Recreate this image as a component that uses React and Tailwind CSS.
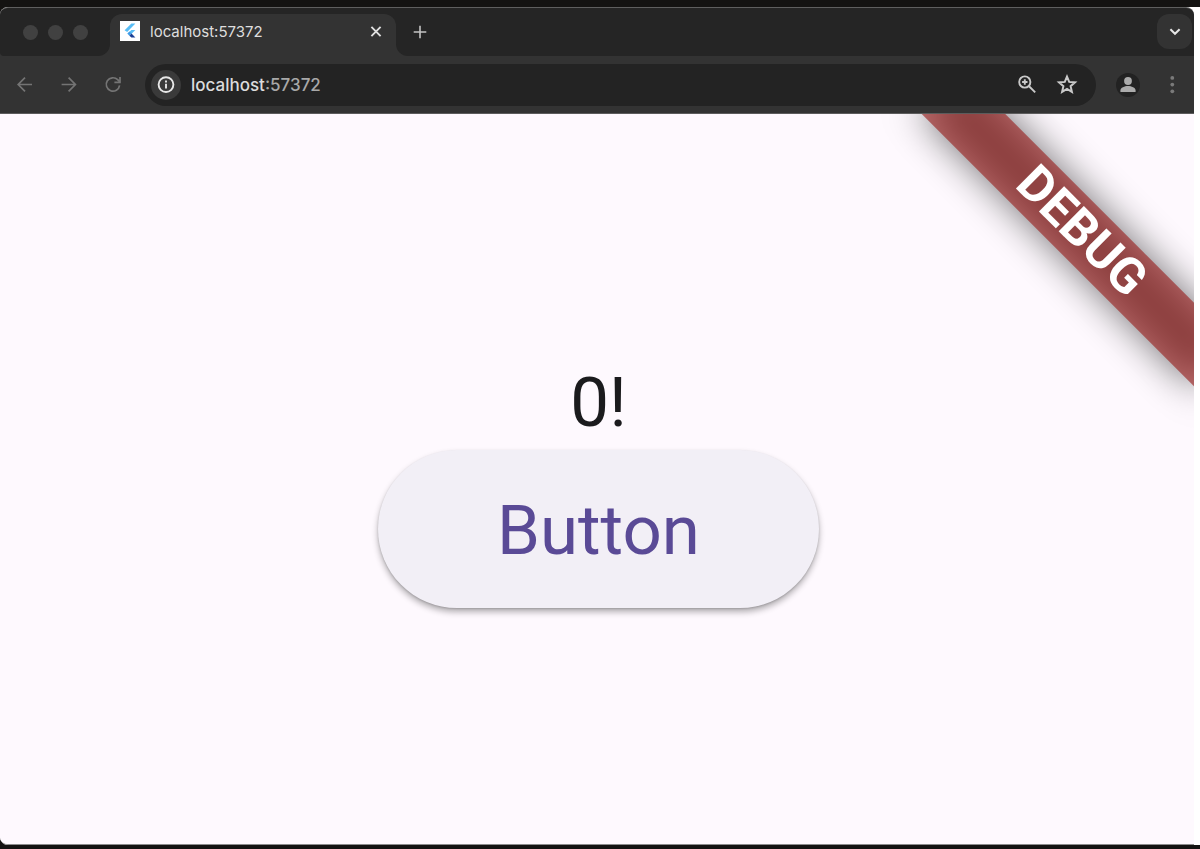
import { useState } from 'react';

function FlutterLogo() {
  return (
    <span className="flex size-5 shrink-0 items-center justify-center bg-white">
      <svg viewBox="0 0 20 20" className="size-5" aria-hidden="true">
        <path d="M11.4 2.6h4L7.2 11 4.6 9.2z" fill="#58bdf5" />
        <path d="M11.4 8.9h4l-4 4-2.2-1.9z" fill="#58bdf5" />
        <path d="M7.3 12.6l2.1-2 2.1 2-2.1 2.1z" fill="#3f9de8" />
        <path d="M9.4 14.7l2.1-2.1 3.9 4h-4z" fill="#1c3f94" />
      </svg>
    </span>
  );
}

function TabStrip() {
  return (
    <div className="flex h-12 bg-[#333333]">
      <div className="flex w-[110px] items-center gap-2.5 rounded-br-xl rounded-bl bg-[#252525] pl-[23px]">
        <span className="size-[15px] rounded-full bg-[#414141]" />
        <span className="size-[15px] rounded-full bg-[#414141]" />
        <span className="size-[15px] rounded-full bg-[#414141]" />
      </div>
      <div className="w-[286px] bg-[#252525] pt-1.5">
        <div className="flex h-full items-start rounded-t-xl bg-[#333333] px-2.5 pt-[7px]">
          <FlutterLogo />
          <span className="ml-2.5 flex-1 text-[15px] leading-[22px] text-[#dedede]">localhost:57372</span>
          <button aria-label="Close tab" className="flex size-5 items-center justify-center text-[#dedede]">
            <svg viewBox="0 0 20 20" className="size-5" fill="none" stroke="currentColor" strokeWidth="1.9" aria-hidden="true">
              <path d="M5.4 5.9l9.2 9.2M14.6 5.9l-9.2 9.2" />
            </svg>
          </button>
        </div>
      </div>
      <div className="flex flex-1 items-start justify-between rounded-bl-xl bg-[#252525] pt-1.5 pr-0.5 pl-3.5">
        <button aria-label="New tab" className="flex h-[35px] w-5 items-center justify-center text-[#c4c4c4]">
          <svg viewBox="0 0 20 20" className="size-5" fill="none" stroke="currentColor" strokeWidth="1.6" aria-hidden="true">
            <path d="M10 3.7v12.6M3.7 10h12.6" />
          </svg>
        </button>
        <button aria-label="Search tabs" className="flex size-[35px] items-center justify-center rounded-xl bg-[#333333] text-[#e6e6e6]">
          <svg viewBox="0 0 20 20" className="size-5" fill="none" stroke="currentColor" strokeWidth="2" aria-hidden="true">
            <path d="M5.4 7.2l4.6 4.6 4.6-4.6" />
          </svg>
        </button>
      </div>
    </div>
  );
}

function Toolbar() {
  const [url, setUrl] = useState(':57372');

  return (
    <div className="flex h-[58px] items-center border-b border-[#5c5c5c] bg-[#333333] pr-3 pl-3.5">
      <div className="flex gap-[22px] text-[#747474]">
        <button aria-label="Back" className="size-[22px]">
          <svg viewBox="0 0 22 22" fill="none" stroke="currentColor" strokeWidth="1.7" aria-hidden="true">
            <path d="M18 10.5H4.6M11 3.7l-6.8 6.8 6.8 6.8" />
          </svg>
        </button>
        <button aria-label="Forward" className="size-[22px]">
          <svg viewBox="0 0 22 22" fill="none" stroke="currentColor" strokeWidth="1.7" aria-hidden="true">
            <path d="M3.6 10.5H17M10.6 3.7l6.8 6.8-6.8 6.8" />
          </svg>
        </button>
        <button aria-label="Reload" className="size-[22px]">
          <svg viewBox="0 0 22 22" fill="none" stroke="currentColor" strokeWidth="1.7" aria-hidden="true">
            <path d="M17.6 11.4A6.7 6.7 0 1 1 15.7 5.7l2 2.2" />
            <path d="M18 3v5.4h-5.6" />
          </svg>
        </button>
      </div>

      <div className="ml-[21px] flex h-[42px] flex-1 items-center rounded-full bg-[#232323] pr-[18px] pl-1.5">
        <button aria-label="View site information" className="flex size-[30px] items-center justify-center rounded-full bg-[#3a3a3a] text-[#e8e8e8]">
          <svg viewBox="0 0 20 20" className="size-5" fill="none" stroke="currentColor" strokeWidth="1.9" aria-hidden="true">
            <circle cx="10" cy="9.6" r="7.4" />
            <path d="M10 8.8v4.8M10 5.6v2" />
          </svg>
        </button>
        <label htmlFor="address" className="ml-2.5 text-[17px] leading-6 font-medium text-[#dcdcdc]">localhost</label>
        <input
          id="address"
          value={url}
          onChange={e => setUrl(e.target.value)}
          className="min-w-0 flex-1 bg-transparent text-[17px] leading-6 font-medium text-[#a8a8a8] outline-none"
        />
        <div className="flex gap-[18px] text-[#c9c9c9]">
          <button aria-label="Zoom" className="size-[22px]">
            <svg viewBox="0 0 22 22" fill="none" stroke="currentColor" strokeWidth="1.9" aria-hidden="true">
              <circle cx="8.8" cy="8" r="5.6" />
              <path d="M12.8 12l6.4 6.4M8.8 5.3v5.4M6.1 8h5.4" />
            </svg>
          </button>
          <button aria-label="Bookmark this tab" className="size-[22px]">
            <svg viewBox="0 0 22 22" fill="none" stroke="currentColor" strokeWidth="2" aria-hidden="true">
              <path d="M11 2.6l2.2 5.3 5.8.5-4.4 3.8 1.3 5.6-4.9-3-4.9 3 1.3-5.6L3 8.4l5.8-.5z" />
            </svg>
          </button>
        </div>
      </div>

      <button aria-label="Profile" className="ml-5 flex size-6 items-center justify-center rounded-full bg-[#222222]">
        <svg viewBox="0 0 24 24" className="size-6" fill="#ababab" aria-hidden="true">
          <circle cx="12" cy="8" r="3.9" />
          <path d="M4.4 19v-1.6c0-2.8 4.2-4.4 7.6-4.4s7.6 1.6 7.6 4.4V19z" />
        </svg>
      </button>
      <button aria-label="Menu" className="ml-[22px] h-6 w-5">
        <svg viewBox="0 0 20 24" fill="#7a7a7a" aria-hidden="true">
          <circle cx="10.3" cy="4.9" r="1.9" />
          <circle cx="10.3" cy="11.6" r="1.9" />
          <circle cx="10.3" cy="18.3" r="1.9" />
        </svg>
      </button>
    </div>
  );
}

function DebugBanner() {
  return (
    <div className="pointer-events-none absolute top-[86px] right-[-78px] h-[59px] w-[386px] rotate-45">
      <div className="absolute inset-0 bg-black/55 blur-[19px]" />
      <div className="relative flex h-full items-center justify-center bg-[#991e1ca0] pb-1 pl-1.5 font-[Roboto] text-[50px] leading-none font-bold text-white">
        DEBUG
      </div>
    </div>
  );
}

export default function App() {
  const [count, setCount] = useState(0);

  return (
    <div className="flex min-h-screen flex-col bg-[#141312] pt-[7px] pb-1 font-[Inter,sans-serif]">
      <div className="flex flex-1 rounded-l-lg bg-white pr-1.5">
        <div className="flex min-w-0 flex-1 flex-col overflow-hidden rounded-l-lg rounded-tr-lg border-t border-b border-t-[#5f5f5f] border-b-[#8c8c8c]">
          <TabStrip />
          <Toolbar />
          <main className="relative flex flex-1 flex-col items-center justify-center overflow-hidden bg-[#fef9fe] pt-1.5 pl-[3px] font-[Roboto,sans-serif]">
            <p className="text-[69px] leading-[94px] text-[#1b1b1d]">{count}!</p>
            <button
              onClick={() => setCount(count + 1)}
              className="h-[158px] rounded-full bg-[#f2eff6] px-[119px] pt-1 text-[69px] leading-[94px] text-[#5a4a96] shadow-[0_4px_6px_rgba(0,0,0,0.3),0_1px_2px_rgba(0,0,0,0.15)]"
            >
              Button
            </button>
            <DebugBanner />
          </main>
        </div>
      </div>
    </div>
  );
}
